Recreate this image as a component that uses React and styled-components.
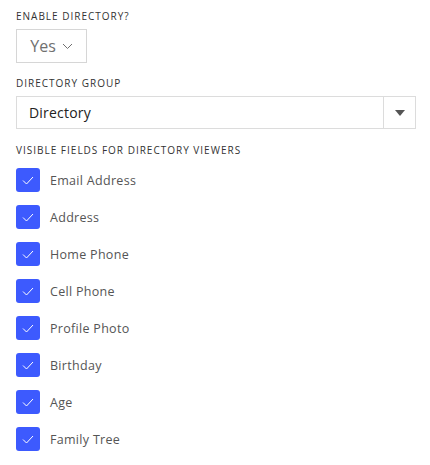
import React, { useState } from "react";
import styled, { createGlobalStyle } from "styled-components";

const GlobalStyle = createGlobalStyle`
  body {
    margin: 0;
    background: #fff;
    font-family: "Open Sans", "Liberation Sans", sans-serif;
  }
`;

const Page = styled.div`
  padding: 10px 14px 0 16px;
  display: flex;
  flex-direction: column;
`;

const Label = styled.div`
  font-size: 10px;
  letter-spacing: 1px;
  color: #333;
  text-transform: uppercase;
  line-height: 13px;
  margin-bottom: ${(p) => p.gap || 6}px;
`;

const Section = styled.div`
  margin-bottom: ${(p) => p.space || 0}px;
`;

const SmallSelect = styled.div`
  box-sizing: border-box;
  width: 71px;
  height: 34px;
  border: 1px solid #d6d6d6;
  display: flex;
  align-items: center;
  justify-content: center;
  gap: 6px;
  font-size: 16px;
  color: #707070;
`;

const WideSelect = styled.div`
  box-sizing: border-box;
  width: 400px;
  height: 33px;
  border: 1px solid #dcdcdc;
  display: flex;
  align-items: stretch;
`;

const SelectValue = styled.div`
  flex: 1;
  display: flex;
  align-items: center;
  padding-left: 12px;
  font-size: 14px;
  color: #222;
  letter-spacing: 0.2px;
`;

const ArrowBox = styled.div`
  width: 31px;
  border-left: 1px solid #dcdcdc;
  display: flex;
  align-items: center;
  justify-content: center;
`;

const Triangle = styled.div`
  width: 0;
  height: 0;
  border-left: 5px solid transparent;
  border-right: 5px solid transparent;
  border-top: 6px solid #555;
`;

const List = styled.div`
  display: flex;
  flex-direction: column;
  gap: 13px;
`;

const Row = styled.label`
  display: flex;
  align-items: center;
  gap: 10px;
  cursor: pointer;
`;

const Box = styled.span`
  width: 24px;
  height: 24px;
  border-radius: 3px;
  background: ${(p) => (p.checked ? "#3d5afe" : "#fff")};
  border: ${(p) => (p.checked ? "none" : "1px solid #bbb")};
  box-sizing: border-box;
  display: flex;
  align-items: center;
  justify-content: center;
`;

const FieldText = styled.span`
  font-size: 12.5px;
  color: #555;
  letter-spacing: 0.3px;
`;

const fields = [
  "Email Address",
  "Address",
  "Home Phone",
  "Cell Phone",
  "Profile Photo",
  "Birthday",
  "Age",
  "Family Tree",
];

function Check() {
  return (
    <svg width="12" height="9" viewBox="0 0 12 9" fill="none">
      <path d="M1 4.5L4.5 8L11 1" stroke="#fff" strokeWidth="1" />
    </svg>
  );
}

export default function App() {
  const [checked, setChecked] = useState(fields.map(() => true));

  return (
    <>
      <GlobalStyle />
      <Page>
        <Section space={14}>
          <Label>Enable Directory?</Label>
          <SmallSelect>
            Yes
            <svg width="11" height="7" viewBox="0 0 11 7" fill="none">
              <path d="M1 1L5.5 5.5L10 1" stroke="#707070" strokeWidth="1" />
            </svg>
          </SmallSelect>
        </Section>
        <Section space={15}>
          <Label>Directory Group</Label>
          <WideSelect>
            <SelectValue>Directory</SelectValue>
            <ArrowBox>
              <Triangle />
            </ArrowBox>
          </WideSelect>
        </Section>
        <Section>
          <Label gap={11}>Visible Fields for Directory Viewers</Label>
          <List>
            {fields.map((f, i) => (
              <Row
                key={f}
                onClick={() =>
                  setChecked(checked.map((c, j) => (j === i ? !c : c)))
                }
              >
                <Box checked={checked[i]}>{checked[i] && <Check />}</Box>
                <FieldText>{f}</FieldText>
              </Row>
            ))}
          </List>
        </Section>
      </Page>
    </>
  );
}
